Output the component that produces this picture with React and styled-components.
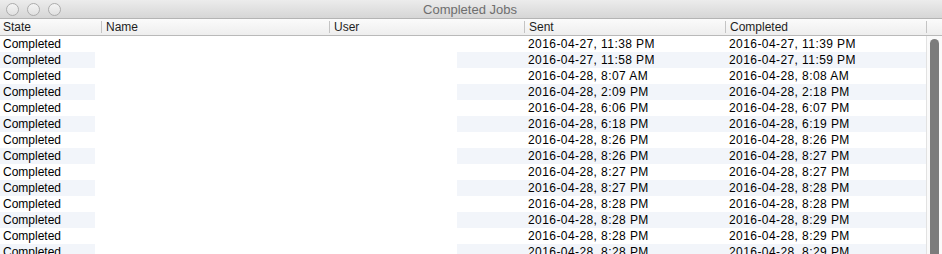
import * as React from "react";
import styled, { createGlobalStyle } from "styled-components";

const COLUMNS = [
  { id: "state", header: "State", width: 101 },
  { id: "name", header: "Name", width: 228 },
  { id: "user", header: "User", width: 195 },
  { id: "sent", header: "Sent", width: 201 },
  { id: "completed", header: "Completed", width: 201 },
];

const JOBS = [
  ["2016-04-27, 11:38 PM", "2016-04-27, 11:39 PM"],
  ["2016-04-27, 11:58 PM", "2016-04-27, 11:59 PM"],
  ["2016-04-28, 8:07 AM", "2016-04-28, 8:08 AM"],
  ["2016-04-28, 2:09 PM", "2016-04-28, 2:18 PM"],
  ["2016-04-28, 6:06 PM", "2016-04-28, 6:07 PM"],
  ["2016-04-28, 6:18 PM", "2016-04-28, 6:19 PM"],
  ["2016-04-28, 8:26 PM", "2016-04-28, 8:26 PM"],
  ["2016-04-28, 8:26 PM", "2016-04-28, 8:27 PM"],
  ["2016-04-28, 8:27 PM", "2016-04-28, 8:27 PM"],
  ["2016-04-28, 8:27 PM", "2016-04-28, 8:28 PM"],
  ["2016-04-28, 8:28 PM", "2016-04-28, 8:28 PM"],
  ["2016-04-28, 8:28 PM", "2016-04-28, 8:29 PM"],
  ["2016-04-28, 8:28 PM", "2016-04-28, 8:29 PM"],
  ["2016-04-28, 8:28 PM", "2016-04-28, 8:29 PM"],
];

const gridTemplate = COLUMNS.map((c) => `${c.width}px`).join(" ") + " 1fr";

export default function App() {
  return (
    <>
      <GlobalStyle />
      <Window>
        <TitleBar>
          <TrafficLights>
            <Light />
            <Light />
            <Light />
          </TrafficLights>
          <Title>Completed Jobs</Title>
        </TitleBar>

        <HeaderRow>
          {COLUMNS.map((col, i) => (
            <HeaderCell key={col.id} $first={i === 0}>
              {col.header}
            </HeaderCell>
          ))}
          <HeaderCell />
        </HeaderRow>

        <Body>
          <Rows>
            {JOBS.map(([sent, completed], i) => (
              <Row key={i} $striped={i % 2 === 1}>
                <Cell $first>Completed</Cell>
                <Cell />
                <Cell />
                <DateCell>{sent}</DateCell>
                <DateCell>{completed}</DateCell>
              </Row>
            ))}
            <Redacted />
          </Rows>
          <ScrollTrack>
            <ScrollThumb />
          </ScrollTrack>
        </Body>
      </Window>
    </>
  );
}

/* =============================== */
// styles

const GlobalStyle = createGlobalStyle`
  html, body {
    margin: 0;
    padding: 0;
    background: #ffffff;
    overflow: hidden;
  }
  body {
    font-family: "Liberation Sans", Arial, sans-serif;
    font-size: 12px;
    color: #000;
  }
`;

const Window = styled.div`
  width: 942px;
  height: 254px;
  overflow: hidden;
  display: flex;
  flex-direction: column;
  background: #fff;
`;

const TitleBar = styled.div`
  position: relative;
  height: 19px;
  flex-shrink: 0;
  display: flex;
  align-items: center;
  justify-content: center;
  background: linear-gradient(#ececec, #d6d6d6);
  border-bottom: 1px solid #b4b4b4;
  box-sizing: border-box;
`;

const TrafficLights = styled.div`
  position: absolute;
  left: 6px;
  top: 3px;
  display: flex;
  gap: 8px;
`;

const Light = styled.span`
  width: 11px;
  height: 11px;
  border-radius: 50%;
  border: 1px solid #acacac;
  background: linear-gradient(#f4f4f4, #e0e0e0);
`;

const Title = styled.div`
  font-size: 13px;
  color: #6e6e6e;
  margin-left: -2px;
  line-height: 19px;
`;

const HeaderRow = styled.div`
  display: grid;
  grid-template-columns: ${gridTemplate};
  height: 17px;
  flex-shrink: 0;
  box-sizing: border-box;
  background: linear-gradient(#fbfbfb, #eeeeee);
  border-bottom: 1px solid #b9b9b9;
`;

const HeaderCell = styled.div`
  position: relative;
  display: flex;
  align-items: center;
  padding-left: ${(p) => (p.$first ? "3px" : "5px")};
  font-size: 12px;
  color: #1e1e1e;
  white-space: nowrap;
  overflow: hidden;

  &::before {
    content: "";
    display: ${(p) => (p.$first ? "none" : "block")};
    position: absolute;
    left: 0;
    top: 2px;
    bottom: 2px;
    width: 1px;
    background: #c4c4c4;
  }
`;

const Body = styled.div`
  flex: 1;
  display: flex;
  min-height: 0;
`;

const Rows = styled.div`
  position: relative;
  width: 926px;
  display: flex;
  flex-direction: column;
  overflow: hidden;
`;

const Row = styled.div`
  display: grid;
  grid-template-columns: ${COLUMNS.map((c) => `${c.width}px`).join(" ")};
  height: 16px;
  flex-shrink: 0;
  align-items: center;
  background: ${(p) => (p.$striped ? "#f2f5fa" : "#ffffff")};
`;

const Cell = styled.div`
  padding-left: ${(p) => (p.$first ? "3px" : "5px")};
  font-size: 12px;
  line-height: 16px;
  white-space: nowrap;
  overflow: hidden;
`;

const DateCell = styled(Cell)`
  padding-left: 4px;
  letter-spacing: 0.42px;
`;

const Redacted = styled.div`
  position: absolute;
  left: 95px;
  top: 16px;
  width: 362px;
  bottom: 0;
  background: #ffffff;
`;

const ScrollTrack = styled.div`
  flex: 1;
  box-sizing: border-box;
  border-left: 1px solid #e2e2e2;
  background: #fafafa;
  padding: 3px 3px 0 3px;
`;

const ScrollThumb = styled.div`
  height: 100%;
  border-radius: 5px 5px 0 0;
  background: #7c7c7c;
`;
